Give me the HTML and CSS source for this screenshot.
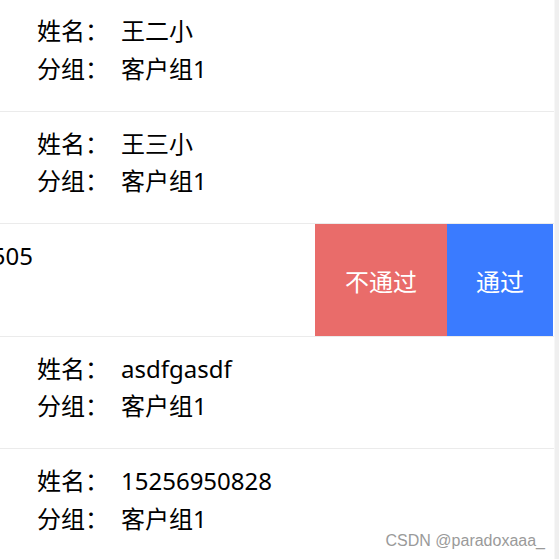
FILE: index.html
```html
<!DOCTYPE html>
<html lang="zh-CN">

<head>
  <meta charset="UTF-8" />
  <meta name="viewport" content="width=device-width, initial-scale=1.0" />
  <title>审核列表</title>
  <link rel="stylesheet" href="styles.css">
</head>

<body>
  <div class="page">
    <div class="list">
      <div class="item">
        <div class="item-track">
          <div class="item-body">
            <div class="line"><span class="label">姓名：</span><span class="value">王二小</span></div>
            <div class="line"><span class="label">分组：</span><span class="value">客户组1</span></div>
          </div>
        </div>
      </div>

      <div class="item">
        <div class="item-track">
          <div class="item-body">
            <div class="line"><span class="label">姓名：</span><span class="value">王三小</span></div>
            <div class="line"><span class="label">分组：</span><span class="value">客户组1</span></div>
          </div>
        </div>
      </div>

      <!-- swiped open -->
      <div class="item swiped">
        <div class="item-track">
          <div class="item-body">
            <div class="line"><span class="label">姓名：</span><span class="value">15256950505</span></div>
            <div class="line"><span class="label">分组：</span><span class="value">客户组1</span></div>
          </div>
          <div class="actions">
            <button class="btn reject">不通过</button>
            <button class="btn pass">通过</button>
          </div>
        </div>
      </div>

      <div class="item">
        <div class="item-track">
          <div class="item-body">
            <div class="line"><span class="label">姓名：</span><span class="value">asdfgasdf</span></div>
            <div class="line"><span class="label">分组：</span><span class="value">客户组1</span></div>
          </div>
        </div>
      </div>

      <div class="item">
        <div class="item-track">
          <div class="item-body">
            <div class="line"><span class="label">姓名：</span><span class="value">15256950828</span></div>
            <div class="line"><span class="label">分组：</span><span class="value">客户组1</span></div>
          </div>
        </div>
      </div>
    </div>

    <div class="scrollbar"></div>
  </div>

  <div class="watermark">CSDN @paradoxaaa_</div>
</body>

</html>
```

FILE: styles.css
```css
html,
body {
  margin: 0;
  height: 100%;
  overflow: hidden;
}

body {
  font-family: 'Noto Sans', 'Noto Sans CJK SC', sans-serif;
  background: #ffffff;
  color: #000000;
}

.page {
  display: flex;
  height: 100%;
}

.list {
  flex: 1;
  min-width: 0;
  margin-top: -1px;
  overflow: hidden;
}

.item {
  height: 112.5px;
  box-sizing: border-box;
  border-bottom: 1px solid #ebebeb;
  overflow: hidden;
}

.item-track {
  display: flex;
  height: 100%;
}

.item-body {
  flex: 0 0 100%;
  box-sizing: border-box;
  padding: 13px 0 0 37px;
}

.line {
  display: flex;
  font-size: 24px;
  line-height: 37.5px;
}

.label {
  width: 84px;
  flex-shrink: 0;
}

.swiped .item-track {
  transform: translateX(-239px);
}

.actions {
  display: flex;
  flex-shrink: 0;
  margin-top: -1px;
  height: calc(100% + 1px);
}

.btn {
  border: none;
  color: #ffffff;
  font-family: 'Noto Sans CJK SC', 'Noto Sans', sans-serif;
  font-size: 24px;
  padding: 3px 0 0;
  cursor: pointer;
}

.btn.reject {
  width: 132px;
  background-color: #e96c6a;
}

.btn.pass {
  width: 106px;
  background-color: #3a7bff;
}

.scrollbar {
  width: 4px;
  flex-shrink: 0;
  background: #efefef;
  border-left: 1px solid #f7f7f7;
}

.watermark {
  position: absolute;
  right: 14px;
  bottom: 9px;
  font-family: 'Liberation Sans', Arial, sans-serif;
  font-size: 16px;
  color: #9a9a9a;
}
```
